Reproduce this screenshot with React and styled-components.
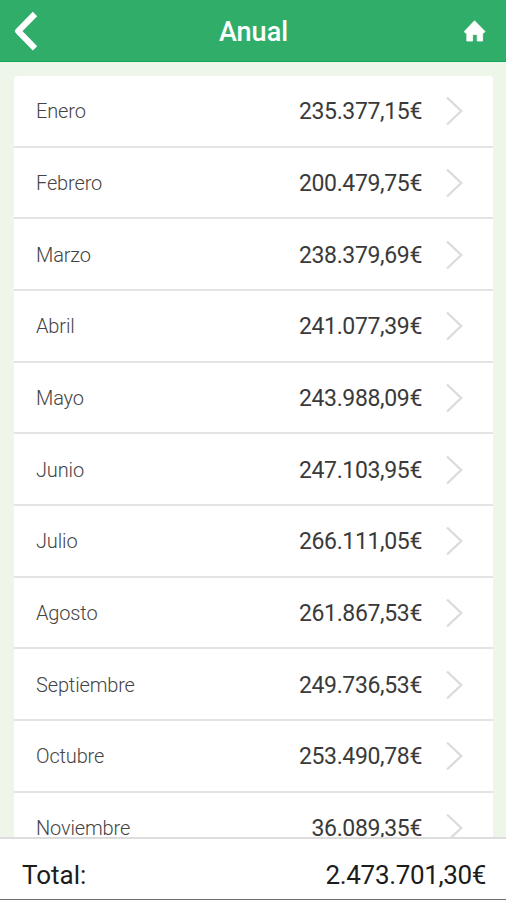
import styled, { createGlobalStyle } from "styled-components"

const GlobalStyle = createGlobalStyle`
  * {
    box-sizing: border-box;
  }
  body {
    margin: 0;
    font-family: Roboto, "Liberation Sans", sans-serif;
    background-color: #edf6e9;
  }
`

const Pantalla = styled.div`
  display: flex;
  flex-direction: column;
  height: 900px;
  overflow: hidden;
  background-color: #edf6e9;
`

const Cabecera = styled.header`
  display: flex;
  flex: none;
  align-items: center;
  justify-content: space-between;
  height: 62px;
  padding: 0 19px 0 13px;
  border-bottom: 1px solid #12a45c;
  background-color: #31ad6a;
  color: white;
`

const Titulo = styled.h1`
  margin: 0;
  padding: 2px 0 0 4px;
  font-size: 27px;
  font-weight: 500;
`

const Contenido = styled.main`
  flex: 1;
  min-height: 0;
  overflow: hidden;
  padding: 14px 13px 0 14px;
`

const Lista = styled.ul`
  margin: 0;
  padding: 0;
  list-style: none;
  border-radius: 3px;
  background-color: white;
`

const Fila = styled.li`
  display: flex;
  align-items: center;
  height: 71.66px;
  padding: 1px 29px 0 22px;
  border-bottom: 2px solid #e4e4e4;
`

const Mes = styled.span`
  flex: 1;
  font-size: 20px;
  font-weight: 300;
  letter-spacing: -0.15px;
  color: #444;
`

const Importe = styled.span`
  padding-top: 1px;
  margin-right: 23px;
  font-size: 23px;
  letter-spacing: -0.35px;
  color: #3a3a3a;
`

const Pie = styled.footer`
  display: flex;
  flex: none;
  align-items: center;
  justify-content: space-between;
  height: 63px;
  padding: 11px 20px 0 22px;
  border-top: 2px solid #ddd;
  border-bottom: 1px solid #6e6e6e;
  background-color: white;
  color: #1c1c1c;
  font-size: 26px;
`

const Total = styled.span`
  letter-spacing: -0.35px;
`

const meses = [
  { nombre: "Enero", importe: "235.377,15€" },
  { nombre: "Febrero", importe: "200.479,75€" },
  { nombre: "Marzo", importe: "238.379,69€" },
  { nombre: "Abril", importe: "241.077,39€" },
  { nombre: "Mayo", importe: "243.988,09€" },
  { nombre: "Junio", importe: "247.103,95€" },
  { nombre: "Julio", importe: "266.111,05€" },
  { nombre: "Agosto", importe: "261.867,53€" },
  { nombre: "Septiembre", importe: "249.736,53€" },
  { nombre: "Octubre", importe: "253.490,78€" },
  { nombre: "Noviembre", importe: "36.089,35€" },
]

function App() {
  return (
    <>
      <GlobalStyle />
      <Pantalla>
        <Cabecera>
          <svg width="26" height="42" viewBox="0 0 26 42">
            <path
              d="M22 4 L5.2 21.2 L22 38.4"
              fill="none"
              stroke="white"
              strokeWidth="6.2"
              strokeLinejoin="round"
            />
          </svg>
          <Titulo>Anual</Titulo>
          <svg width="23" height="22" viewBox="0 0 23 22">
            <path
              d="M10.5 0.8 L21 11.4 L19.8 12.9 H18.6 V21 H13.2 V14.6 H8.6 V21 H2.8 V12.9 H1.2 L0.4 11.4 Z"
              fill="white"
              stroke="white"
              strokeWidth="0.8"
              strokeLinejoin="round"
            />
          </svg>
        </Cabecera>
        <Contenido>
          <Lista>
            {meses.map((m) => (
              <Fila key={m.nombre}>
                <Mes>{m.nombre}</Mes>
                <Importe>{m.importe}</Importe>
                <svg width="19" height="30" viewBox="0 0 19 30">
                  <path d="M2 1.5 L16.2 15 L2 28.5" fill="none" stroke="#dcdcdc" strokeWidth="2.4" />
                </svg>
              </Fila>
            ))}
          </Lista>
        </Contenido>
        <Pie>
          <span>Total:</span>
          <Total>2.473.701,30€</Total>
        </Pie>
      </Pantalla>
    </>
  )
}

export default App
